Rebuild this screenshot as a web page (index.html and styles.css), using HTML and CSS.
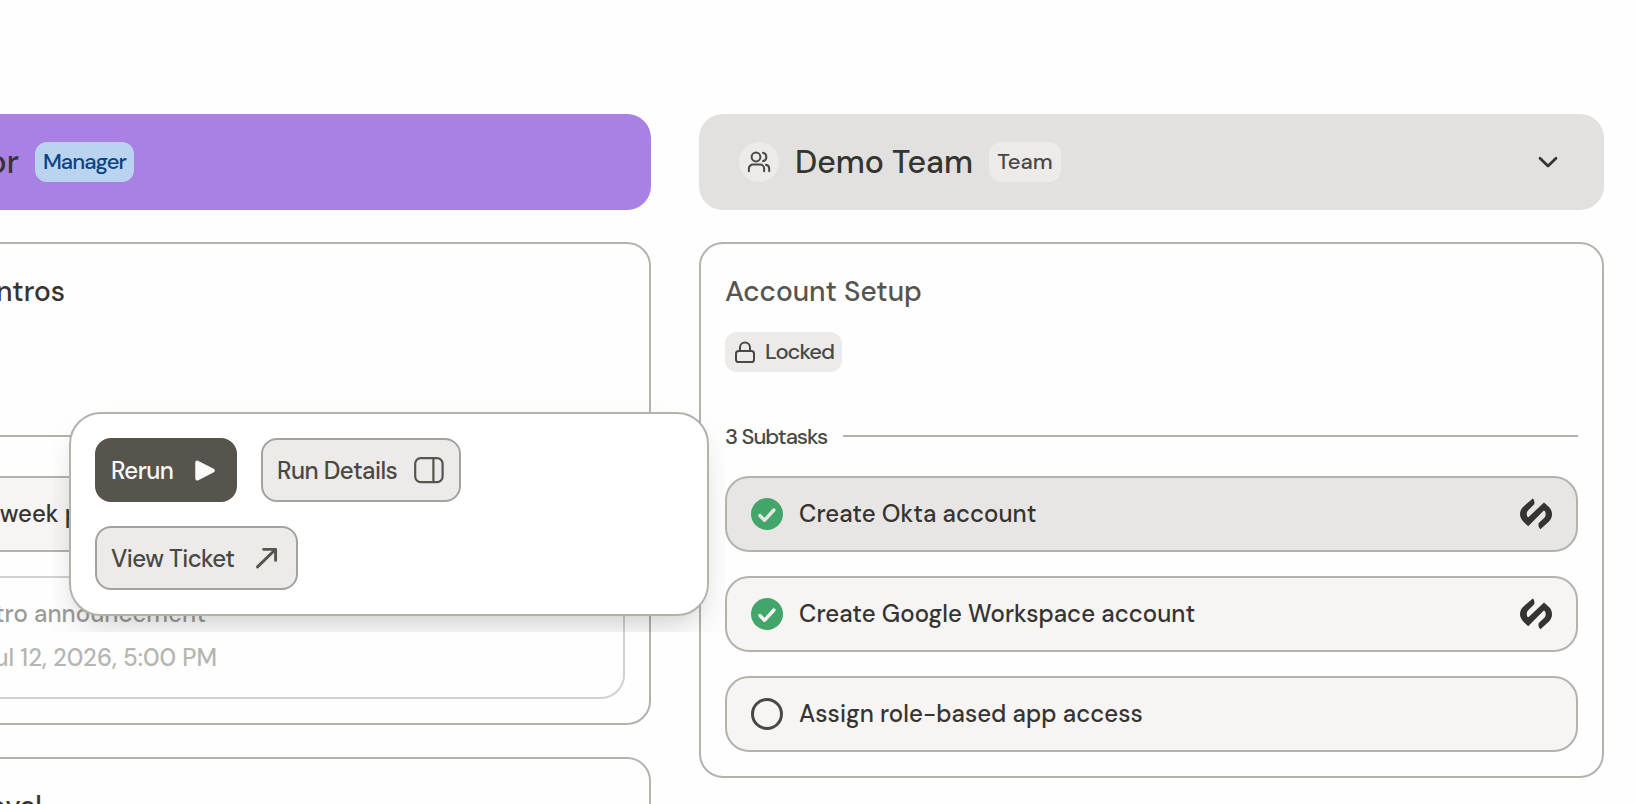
FILE: index.html
```html
<!DOCTYPE html>
<html lang="en">
<head>
  <meta charset="UTF-8">
  <meta name="viewport" content="width=device-width, initial-scale=1.0">
  <title>Onboarding Board</title>
  <link rel="stylesheet" href="styles.css">
</head>
<body>
  <svg class="sprite">
    <symbol id="check" viewBox="0 0 32 32">
      <circle cx="16" cy="16" r="16" fill="#42a66b"/>
      <path d="M8.9 17.5l4.6 4.8L22.9 12" fill="none" stroke="currentColor" stroke-width="3.4" stroke-linecap="round" stroke-linejoin="round"/>
    </symbol>
    <symbol id="logo" viewBox="0 0 32 32">
      <path d="M12.8 .4C14.2 1.8 14.8 3.8 14.2 6.2L8 12.5C6.6 14 6.4 16 7.2 18.4L8.4 19.2L24 4.4L29 9C33 13 33 19.4 29 23.4L20.4 31.2C18.6 29.4 18 27.4 18.8 25L24.6 19.4C26 17.8 26 15.6 25 13.2L23.8 12.6L8.2 28.3L3 23.2C-1 19.2-1 13 3 9Z" fill="#363430"/>
    </symbol>
  </svg>

  <main class="board">
    <section class="column">
      <header class="column-header purple">
        <h1 class="name cut">or</h1>
        <span class="badge blue">Manager</span>
      </header>

      <article class="card">
        <h2 class="title dark cut">ntros</h2>
        <div class="badge-row"></div>
        <div class="divider"></div>
        <div class="tasks">
          <div class="task"><span class="label cut week">week p</span></div>
          <div class="task faded">
            <span class="label cut intro">tro announcement</span>
            <span class="date cut">ul 12, 2026, 5:00 PM</span>
          </div>
        </div>
      </article>

      <article class="card">
        <h2 class="title dark cut approval">oval</h2>
      </article>
    </section>

    <section class="column">
      <header class="column-header gray">
        <span class="avatar">
          <svg width="24" height="24" viewBox="0 0 24 24" fill="none" stroke="#4a4843" stroke-width="2" stroke-linecap="round" stroke-linejoin="round">
            <circle cx="9" cy="7" r="4.4"/>
            <path d="M1.9 21.2v-2.6a4 4 0 0 1 4-4h7.2a4 4 0 0 1 4 4v2.6M16 2.8a4.3 4.3 0 0 1 0 8.4M22.2 21.2v-2.4a4 4 0 0 0-3.2-4"/>
          </svg>
        </span>
        <h1 class="name demo">Demo Team</h1>
        <span class="badge team">Team</span>
        <svg class="chevron" width="32" height="32" viewBox="0 0 32 32" fill="none" stroke="#363430" stroke-width="2.8" stroke-linecap="round" stroke-linejoin="round">
          <path d="M8 12.3l8 7.8 8-7.8"/>
        </svg>
      </header>

      <article class="card">
        <h2 class="title">Account Setup</h2>
        <div class="badge-row">
          <span class="badge locked">
            <svg width="24" height="24" viewBox="0 0 24 24" fill="none" stroke="#4a4843" stroke-width="2" stroke-linecap="round" stroke-linejoin="round">
              <rect x="3" y="11" width="18" height="11" rx="2.6"/>
              <path d="M7 11V7.4a5 5 0 0 1 10 0V11"/>
            </svg>
            <span>Locked</span>
          </span>
        </div>
        <div class="divider"><span>3 Subtasks</span></div>
        <div class="tasks">
          <div class="task active">
            <svg class="status" width="32" height="32"><use href="#check"/></svg>
            <span class="label">Create Okta account</span>
            <svg class="logo" width="32" height="32"><use href="#logo"/></svg>
          </div>
          <div class="task">
            <svg class="status" width="32" height="32"><use href="#check"/></svg>
            <span class="label">Create Google Workspace account</span>
            <svg class="logo" width="32" height="32"><use href="#logo"/></svg>
          </div>
          <div class="task">
            <span class="circle"></span>
            <span class="label">Assign role-based app access</span>
          </div>
        </div>
      </article>
    </section>
  </main>

  <div class="popover">
    <button type="button" class="btn primary rerun">
      <span>Rerun</span>
      <svg width="32" height="32" viewBox="0 0 32 32">
        <path d="M8.3 7.8L23.7 15.5Q25.6 16.5 23.7 17.5L8.8 25.2Q7.5 25.5 7.5 24V9Q7.5 7.5 8.3 7.8Z" fill="#fafaf9" stroke="#fafaf9" stroke-width="2.5" stroke-linejoin="round"/>
      </svg>
    </button>
    <button type="button" class="btn details">
      <span>Run Details</span>
      <svg width="32" height="32" viewBox="0 0 32 32" fill="none" stroke="#57544d" stroke-width="2.2">
        <rect x="2.2" y="4.1" width="27.4" height="24" rx="5.5"/>
        <path d="M20.4 4.5v23.6"/>
      </svg>
    </button>
    <button type="button" class="btn ticket">
      <span>View Ticket</span>
      <svg width="32" height="32" viewBox="0 0 32 32" fill="none" stroke="#57544d" stroke-width="2.9" stroke-linecap="round" stroke-linejoin="round">
        <path d="M7.5 24.9L25.4 7.5M13.6 7.4h12v11"/>
      </svg>
    </button>
  </div>
</body>
</html>
```

FILE: styles.css
```css
* {
  box-sizing: border-box;
}

html {
  height: 100%;
  overflow: hidden;
}

body {
  margin: 0;
  height: 100%;
  overflow: hidden;
  background: #fefefe;
  font-family: "DM Sans", Lato, "Open Sans", sans-serif;
  font-weight: 500;
  color: #363430;
}

h1,
h2 {
  margin: 0;
  font-weight: 500;
}

svg {
  display: block;
  flex: none;
}

.sprite {
  display: none;
}

.board {
  display: flex;
  justify-content: flex-end;
  align-items: flex-start;
  gap: 48px;
  height: 100%;
  padding: 114px 32px 0 0;
  overflow: hidden;
}

.column {
  flex: none;
  width: 905px;
  display: flex;
  flex-direction: column;
  gap: 32px;
}

.column-header {
  display: flex;
  align-items: center;
  gap: 16px;
  height: 96px;
  padding: 0 40px;
  border-radius: 24px;
}

.purple {
  background: #a981e4;
}

.gray {
  background: #e2e1df;
}

.avatar {
  display: flex;
  align-items: center;
  justify-content: center;
  width: 40px;
  height: 40px;
  border-radius: 50%;
  background: #ecebe9;
}

.name {
  font-size: 32px;
  line-height: 40px;
  white-space: nowrap;
}

/* the board is scrolled sideways, these labels end at a fixed edge */
.cut {
  text-align: right;
  white-space: nowrap;
}

.name.cut {
  width: 233px;
}

.demo {
  width: 178px;
}

.badge {
  display: flex;
  align-items: center;
  justify-content: center;
  gap: 8px;
  height: 40px;
  border-radius: 12px;
  background: #ecebe9;
  color: #4a4843;
  font-size: 22px;
  line-height: 32px;
}

.blue {
  width: 99px;
  background: #bad3ef;
  color: #0a4384;
  letter-spacing: -0.9px;
}

.team {
  width: 72px;
}

.locked {
  width: 117px;
  letter-spacing: -1px;
}

.chevron {
  margin-left: auto;
}

.card {
  padding: 24px;
  border: 2px solid #b3b3ae;
  border-radius: 24px;
}

.title {
  font-size: 28px;
  line-height: 48px;
  color: #57544d;
}

.dark {
  color: #363430;
}

.title.cut {
  width: 293px;
}

.title.approval {
  width: 270px;
}

.badge-row {
  height: 40px;
  margin: 16px 0 48px;
  display: flex;
}

.divider {
  display: flex;
  align-items: center;
  gap: 16px;
  height: 32px;
  margin-bottom: 24px;
  font-size: 22px;
  letter-spacing: -1.05px;
  color: #4a4843;
}

.divider::after {
  content: "";
  flex: 1;
  height: 2px;
  background: #b3b3ae;
}

.divider span {
  width: 102px;
  white-space: nowrap;
}

.tasks {
  display: flex;
  flex-direction: column;
  gap: 24px;
}

.task {
  display: flex;
  align-items: center;
  gap: 16px;
  height: 76px;
  padding: 0 24px;
  border: 2px solid #b3b3ae;
  border-radius: 24px;
  background: #f6f5f3;
}

.active {
  background: #e7e6e4;
}

.status {
  color: #f6f5f3;
}

.active .status {
  color: #e7e6e4;
}

.circle {
  width: 32px;
  height: 32px;
  border: 3px solid #4a4843;
  border-radius: 50%;
}

.label {
  font-size: 24px;
  line-height: 32px;
  letter-spacing: 0.04px;
  white-space: nowrap;
}

.logo {
  margin-left: auto;
}

.faded {
  flex-direction: column;
  align-items: flex-start;
  gap: 12px;
  height: 123px;
  padding: 20px 24px;
  border-color: #d1d1cf;
  background: transparent;
}

.week {
  width: 282px;
}

.intro {
  width: 408px;
  color: #9c9b98;
}

.date {
  width: 419px;
  font-size: 24px;
  line-height: 32px;
  color: #b6b5b2;
}

.popover {
  position: absolute;
  left: 69px;
  top: 412px;
  width: 640px;
  height: 204px;
  display: flex;
  flex-wrap: wrap;
  align-content: flex-start;
  gap: 24px;
  padding: 24px;
  border: 2px solid #b3b3ae;
  border-radius: 32px;
  background: #fff;
  box-shadow: 0 24px 48px -8px rgba(0, 0, 0, 0.1), 0 10px 20px -8px rgba(0, 0, 0, 0.12);
  clip-path: inset(-16px);
}

.btn {
  display: flex;
  align-items: center;
  justify-content: space-between;
  height: 64px;
  padding: 0 14px;
  border: 2px solid #a3a29e;
  border-radius: 16px;
  background: #ecebe9;
  color: #4a4843;
  font-family: inherit;
  font-size: 24px;
  font-weight: 500;
  letter-spacing: -0.53px;
  white-space: nowrap;
  cursor: pointer;
}

.primary {
  border-color: #57544d;
  background: #57544d;
  color: #fafaf9;
}

.rerun {
  width: 142px;
}

.details {
  width: 200px;
}

.ticket {
  width: 203px;
}
```
